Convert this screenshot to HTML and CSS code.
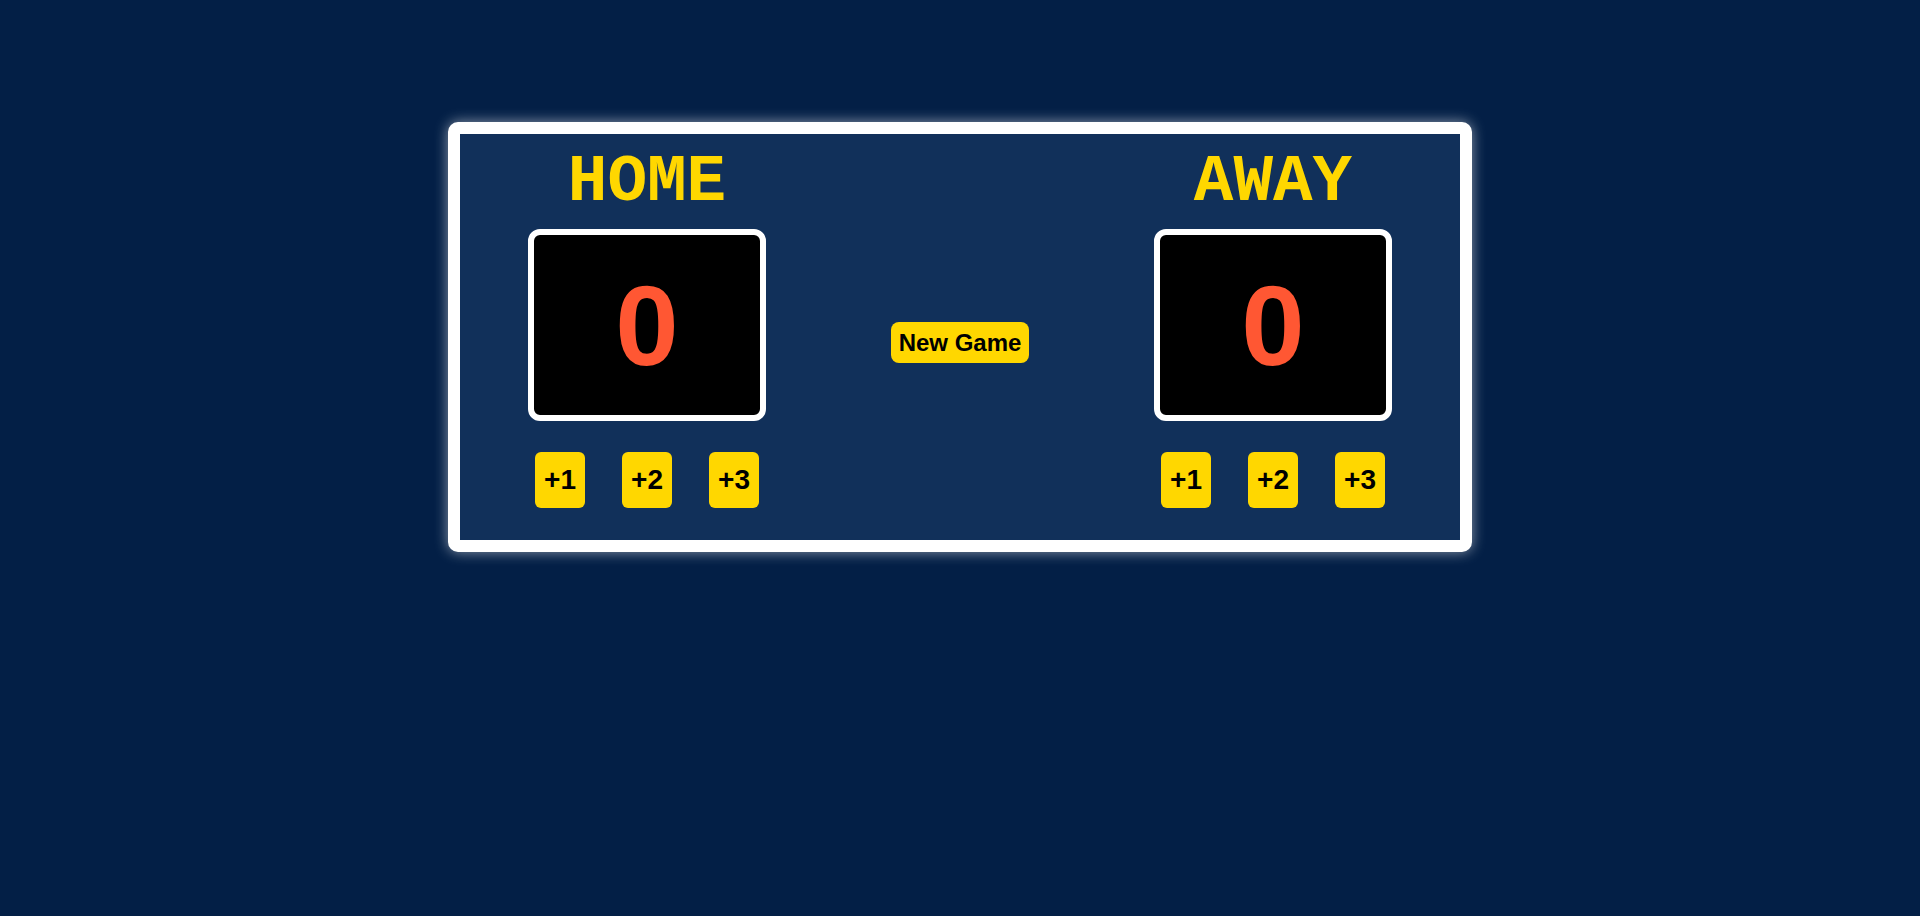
FILE: index.html
```html
<!DOCTYPE html>
<html lang="en">
<head>
<meta charset="utf-8">
<title>Basketball Scoreboard</title>
<link rel="stylesheet" href="styles.css">
</head>
<body>
<main class="page">
  <section class="board">
    <div class="team">
      <h2 class="team-name">HOME</h2>
      <div class="score-box"><span class="score">0</span></div>
      <div class="btn-row">
        <button class="add-btn">+1</button>
        <button class="add-btn">+2</button>
        <button class="add-btn">+3</button>
      </div>
    </div>
    <div class="middle">
      <button class="new-game">New Game</button>
    </div>
    <div class="team">
      <h2 class="team-name">AWAY</h2>
      <div class="score-box"><span class="score">0</span></div>
      <div class="btn-row">
        <button class="add-btn">+1</button>
        <button class="add-btn">+2</button>
        <button class="add-btn">+3</button>
      </div>
    </div>
  </section>
</main>
</body>
</html>
```

FILE: styles.css
```css
html, body {
  margin: 0;
  padding: 0;
}

body {
  background: #031f46;
  min-height: 916px;
  font-family: "Liberation Sans", Arial, sans-serif;
}

.page {
  display: flex;
  justify-content: center;
  padding-top: 122px;
}

.board {
  width: 1000px;
  height: 406px;
  box-sizing: content-box;
  background: #11305a;
  border: 12px solid #ffffff;
  border-radius: 10px;
  box-shadow: 0 0 14px rgba(255, 255, 255, 0.55);
  display: grid;
  grid-template-columns: 374px 1fr 374px;
}

.team {
  display: flex;
  flex-direction: column;
  align-items: center;
  padding-top: 15px;
}

.team-name {
  margin: 0;
  font-family: "Liberation Mono", "Courier New", monospace;
  font-weight: bold;
  font-size: 66px;
  line-height: 68px;
  color: #ffd700;
}

.score-box {
  margin-top: 12px;
  width: 226px;
  height: 180px;
  background: #000000;
  border: 6px solid #ffffff;
  border-radius: 12px;
  display: flex;
  align-items: center;
  justify-content: center;
}

.score {
  font-family: "Liberation Sans", Arial, sans-serif;
  font-weight: bold;
  font-size: 114px;
  color: #ff5733;
}

.btn-row {
  margin-top: 31px;
  display: flex;
  gap: 37px;
}

.add-btn {
  width: 50px;
  height: 56px;
  padding: 0;
  border: none;
  border-radius: 6px;
  background: #ffd700;
  color: #000000;
  font-family: "Liberation Sans", Arial, sans-serif;
  font-weight: bold;
  font-size: 28px;
}

.middle {
  display: flex;
  justify-content: center;
  align-items: flex-start;
  padding-top: 188px;
}

.new-game {
  padding: 7px 8px;
  height: 41px;
  border: none;
  border-radius: 8px;
  background: #ffd700;
  color: #000000;
  font-family: "Liberation Sans", Arial, sans-serif;
  font-weight: bold;
  font-size: 24px;
  line-height: 27px;
}
```
